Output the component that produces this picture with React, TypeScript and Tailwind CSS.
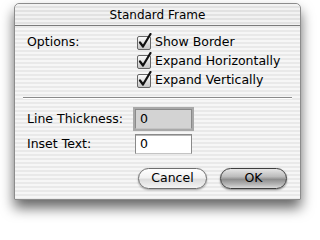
import type { ReactNode } from "react";

const stripes =
	"bg-[repeating-linear-gradient(to_bottom,#f6f6f6_0px,#f6f6f6_2px,#e9e9e9_2px,#e9e9e9_4px)]";

function CheckBox({ label }: { label: string }) {
	return (
		<div className="flex h-[19px] items-center gap-[2px]">
			<svg width="17" height="17" viewBox="0 0 17 17" className="-mt-[2px]">
				<defs>
					<linearGradient id="cbfill" x1="0" y1="0" x2="0" y2="1">
						<stop offset="0" stopColor="#ffffff" />
						<stop offset="0.5" stopColor="#e0e0e0" />
						<stop offset="1" stopColor="#c4c4c4" />
					</linearGradient>
				</defs>
				<rect
					x="1.5"
					y="3.5"
					width="13"
					height="13"
					rx="1.5"
					fill="url(#cbfill)"
					stroke="#666"
				/>
				<path
					d="M4 9.5 L7 13.5 L14.5 1"
					fill="none"
					stroke="#111"
					strokeWidth="2.2"
					strokeLinecap="round"
					strokeLinejoin="round"
				/>
			</svg>
			<span>{label}</span>
		</div>
	);
}

function Field({ value, focused }: { value: string; focused?: boolean }) {
	return (
		<div
			className={`flex h-[20px] w-[57px] items-center border border-[#8a8a8a] border-b-[#c4c4c4] px-[4px] ${
				focused
					? "bg-[#d3d3d3] shadow-[0_0_0_2px_#a9a9a9]"
					: "bg-white shadow-[inset_0_1px_0_#b8b8b8]"
			}`}
		>
			{value}
		</div>
	);
}

function Row({ label, children }: { label: string; children: ReactNode }) {
	return (
		<div className="grid grid-cols-[108px_1fr] items-center">
			<span>{label}</span>
			<div>{children}</div>
		</div>
	);
}

export default function App() {
	return (
		<div className="h-[223px] w-[315px] bg-white pl-[14px] pt-[3px] font-['DejaVu_Sans',sans-serif] text-[12.5px] text-black">
			<div
				className={`flex h-[197px] w-[287px] flex-col rounded-t-[5px] border border-[#8c8c8c] shadow-[0_8px_13px_rgba(0,0,0,0.6)] ${stripes}`}
			>
				<div className="flex h-[22px] shrink-0 items-center justify-center rounded-t-[5px] border-b border-[#7a7a7a] bg-[repeating-linear-gradient(to_bottom,#f2f2f2_0px,#f2f2f2_2px,#e2e2e2_2px,#e2e2e2_4px)] text-[12px]">
					Standard Frame
				</div>

				<div className="grid grid-cols-[109px_1fr] px-[12px] pt-[7px]">
					<div className="flex h-[19px] items-center">Options:</div>
					<div className="flex flex-col">
						<CheckBox label="Show Border" />
						<CheckBox label="Expand Horizontally" />
						<CheckBox label="Expand Vertically" />
					</div>
				</div>

				<div className="mx-[8px] mt-[7px] h-px bg-[#8a8a8a] shadow-[0_1px_0_#ffffff]" />

				<div className="flex flex-col gap-[5px] px-[12px] pt-[11px]">
					<Row label="Line Thickness:">
						<Field value="0" focused />
					</Row>
					<Row label="Inset Text:">
						<Field value="0" />
					</Row>
				</div>

				<div className="mt-[14px] flex justify-end gap-[13px] pr-[13px]">
					<button className="flex h-[21px] w-[69px] items-center justify-center rounded-full border border-[#6e6e6e] bg-[linear-gradient(to_bottom,#ffffff_0%,#f2f2f2_45%,#dcdcdc_55%,#f4f4f4_100%)] shadow-[0_1px_2px_rgba(0,0,0,0.35)]">
						Cancel
					</button>
					<button className="flex h-[21px] w-[67px] items-center justify-center rounded-full border border-[#3e3e3e] bg-[linear-gradient(to_bottom,#e6e6e6_0%,#bcbcbc_40%,#8e8e8e_55%,#b4b4b4_80%,#dadada_100%)] shadow-[0_1px_2px_rgba(0,0,0,0.45)]">
						OK
					</button>
				</div>
			</div>
		</div>
	);
}
